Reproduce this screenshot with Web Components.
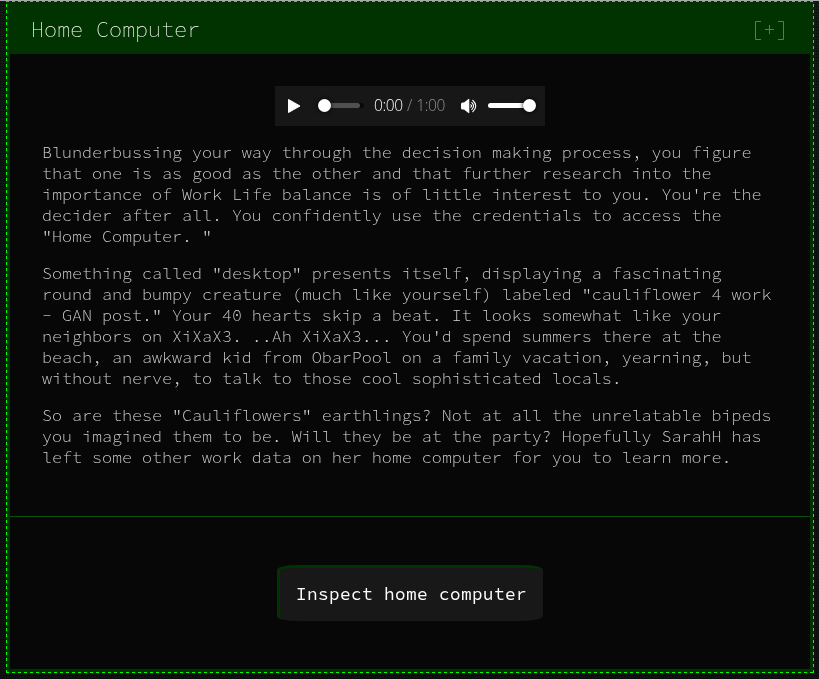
<!DOCTYPE html>
<html lang="en"><head><meta charset="utf-8"><title>Home Computer</title>
<style>
html,body{margin:0;height:679px;overflow:hidden}
body{background:#101211;background-image:repeating-linear-gradient(0deg,#0004 0 1px,transparent 1px 3px),repeating-linear-gradient(90deg,#0003 0 1px,transparent 1px 3px),linear-gradient(#151b16,#0d1514 35%,#121212 65%,#131013);font-family:"Source Code Pro","Liberation Mono",monospace}
</style></head><body>
<game-window>
<title-bar slot="head">Home Computer</title-bar>
<audio-bar></audio-bar>
<story-text>
<p>Blunderbussing your way through the decision making process, you figure
that one is as good as the other and that further research into the
importance of Work Life balance is of little interest to you. You're the
decider after all. You confidently use the credentials to access the
"Home Computer. "</p>
<p>Something called "desktop" presents itself, displaying a fascinating
round and bumpy creature (much like yourself) labeled "cauliflower 4 work
- GAN post." Your 40 hearts skip a beat. It looks somewhat like your
neighbors on XiXaX3. ..Ah XiXaX3... You'd spend summers there at the
beach, an awkward kid from ObarPool on a family vacation, yearning, but
without nerve, to talk to those cool sophisticated locals.</p>
<p>So are these "Cauliflowers" earthlings? Not at all the unrelatable bipeds
you imagined them to be. Will they be at the party? Hopefully SarahH has
left some other work data on her home computer for you to learn more.</p>
</story-text>
<action-button slot="foot">Inspect home computer</action-button>
</game-window>
<script>
const define=(name,html)=>customElements.define(name,class extends HTMLElement{
  constructor(){super();this.attachShadow({mode:'open'}).innerHTML=html;}
});
define('game-window',`<style>
:host{display:block;box-sizing:border-box;height:679px;padding:1px 5px 6px 6px;background:linear-gradient(#aaa 1px,transparent 1px)}
.frame{box-sizing:border-box;width:808px;height:672px;padding:1px;background:
 repeating-linear-gradient(90deg,#0f0 0 3px,transparent 3px 6px) 0 0/100% 1px no-repeat,
 repeating-linear-gradient(90deg,#0f0 0 3px,transparent 3px 6px) 0 100%/100% 1px no-repeat,
 repeating-linear-gradient(0deg,#0f0 0 3px,transparent 3px 6px) 0 0/1px 100% no-repeat,
 repeating-linear-gradient(0deg,#0f0 0 3px,transparent 3px 6px) 100% 0/1px 100% no-repeat,#030}
.inner{box-sizing:border-box;height:670px;border:solid #030;border-width:0 3px 3px;display:flex;flex-direction:column}
main{box-sizing:border-box;height:462px;background:#070707;padding-top:32px}
footer{flex:1;background:#070707;border-top:1px solid #0a500a;display:flex;justify-content:center;align-items:flex-start;padding-top:48px}
</style><div class="frame"><div class="inner"><slot name="head"></slot><main><slot></slot></main><footer><slot name="foot"></slot></footer></div></div>`);
define('title-bar',`<style>
:host{display:flex;box-sizing:border-box;height:52px;flex:none;background:#030;justify-content:space-between;align-items:center;padding:4px 23px 0 21px;font-size:21.670px;font-weight:200;line-height:26px;color:#fff}
span{will-change:transform}
svg{display:block;width:32px;height:20px;margin-top:2px}
</style><span><slot></slot></span><svg viewBox="0 0 32 20" fill="none" stroke="#00b800"><path d="M6 .5H.5v18h5.500M23 .5h5.500v18H23M10 8.500h9M14.500 4v9"/></svg>`);
define('audio-bar',`<style>
:host{display:flex;box-sizing:border-box;width:270px;height:40px;margin:0 auto;background:#171717;align-items:center;font:15.500px/20px "Open Sans","Noto Sans",sans-serif}
svg{display:block;flex:none}
.time{display:flex;width:71px;margin:-2px 1px 0 10px;justify-content:space-between;color:#fff;will-change:transform}
.time span,.time i{font-weight:350;letter-spacing:-.35px}
.time i{font-style:normal;color:#929292}
.sound{margin-left:13px}
</style><svg width="89" height="40" viewBox="0 0 89 40"><path d="M13.500 13.500v13L25 20z" fill="#fff" stroke="#fff" stroke-linejoin="round"/><rect x="45" y="17" width="44" height="5" rx="2.500" fill="#080808"/><rect x="45" y="17" width="40" height="5" rx="2.500" fill="#505050"/><circle cx="49.500" cy="19.500" r="6.500" fill="#fff" style="filter:drop-shadow(0 0 2px #000)"/></svg>
<div class="time"><span>0:00</span><i>/</i><i>1:00</i></div>
<svg class="sound" width="82" height="40" viewBox="0 0 82 40"><path d="M2 18q0-1.500 1.500-1.500H5L9.500 13q.8-.5 .8 .5v13q0 1-.8 .5L5 23.500H3.500Q2 23.500 2 22z" fill="#fff"/><path d="M11.500 18.500q2 1.500 0 3M12.500 16.200q4 3.800 0 7.600M13.500 14q6.500 6 0 12" fill="none" stroke="#fff" stroke-width="1.100"/><rect x="29" y="17" width="45" height="5" rx="2.500" fill="#fff"/><circle cx="70.500" cy="19.500" r="6.500" fill="#fff" style="filter:drop-shadow(0 0 2px #000)"/></svg>`);
define('story-text',`<style>
:host{display:block;padding:16px 0 0 32px;color:#d4d4d4;font-size:16.670px;font-weight:300;line-height:21px;will-change:transform}
::slotted(p){margin:0 0 16px;white-space:pre}
</style><slot></slot>`);
define('action-button',`<style>
:host{display:flex;box-sizing:border-box;width:266px;height:56px;background:#181818;border:solid #030;border-width:3px 0 0 3px;border-radius:20px/5px;align-items:center;justify-content:center;padding-bottom:2px;color:#fff;font-size:17.500px;letter-spacing:.5px;white-space:nowrap;will-change:transform}
</style><slot></slot>`);
</script></body></html>
